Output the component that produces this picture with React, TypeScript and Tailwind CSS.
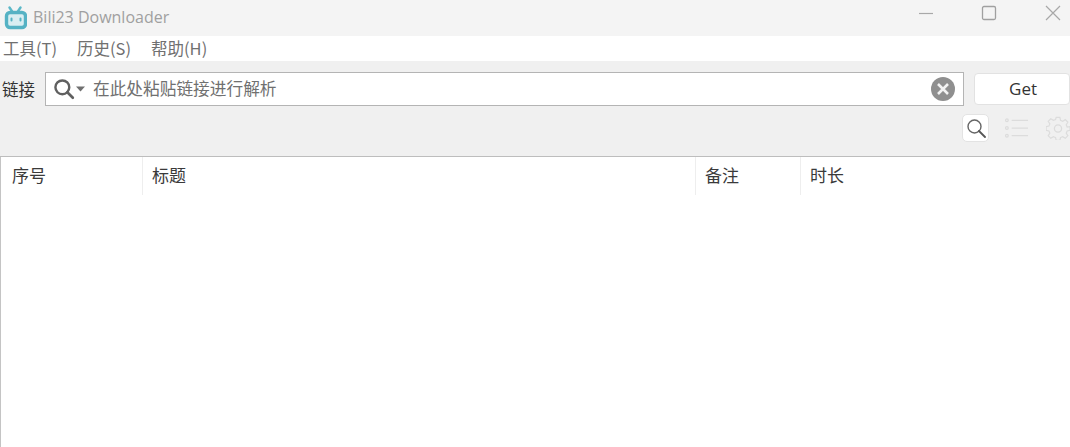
import React from "react";

const cjk = { fontFamily: '"Noto Sans CJK SC", "Noto Sans", sans-serif' };

function Logo() {
  return (
    <svg width="24" height="24" viewBox="0 0 24 24" fill="none">
      <path d="M6.5 1.5 L9.5 6 M17.5 1.5 L14.5 6" stroke="#5bb8c8" strokeWidth="2.4" strokeLinecap="round" />
      <rect x="3.5" y="6.5" width="19" height="15" rx="3.5" fill="#d9eef2" stroke="#55b2c4" strokeWidth="3.4" />
      <path d="M8.5 12.5V14.5M17.5 12.5V14.5" stroke="#55b2c4" strokeWidth="2" strokeLinecap="round" />
    </svg>
  );
}

function Column({ label, className }: { label: string; className: string }) {
  return (
    <div className={`flex h-[38px] items-center border-r border-[#eeeeee] pb-[2px] text-[17px] text-[#3a3a3a] ${className}`}>
      {label}
    </div>
  );
}

export default function App() {
  return (
    <div className="flex h-[447px] w-[1070px] flex-col overflow-hidden bg-white" style={cjk}>
      <div className="flex h-[36px] shrink-0 items-center bg-[#f4f4f4] pl-[3px]">
        <Logo />
        <span className="ml-[6px] pb-[2px] text-[16px] text-[#a0a0a0]" style={{ fontFamily: '"Open Sans", sans-serif' }}>
          Bili23 Downloader
        </span>
        <div className="ml-auto flex items-center pb-[10px]">
          <svg width="16" height="16" viewBox="0 0 16 16" className="mr-[47px]">
            <path d="M1 8.5H15" stroke="#a8a8a8" strokeWidth="1.2" />
          </svg>
          <svg width="16" height="16" viewBox="0 0 16 16" className="mr-[48px]">
            <rect x="1.5" y="1.5" width="13" height="13" rx="1.5" fill="none" stroke="#a0a0a0" strokeWidth="1.3" />
          </svg>
          <svg width="16" height="16" viewBox="0 0 16 16" className="mr-[9px]">
            <path d="M1 1L15 15M15 1L1 15" stroke="#a8a8a8" strokeWidth="1.2" />
          </svg>
        </div>
      </div>

      <div className="flex h-[25px] shrink-0 items-center gap-[20px] bg-white pl-[3px] pb-[1px] text-[16.5px] text-[#707070]">
        <span>工具(T)</span>
        <span>历史(S)</span>
        <span>帮助(H)</span>
      </div>

      <div className="flex h-[96px] shrink-0 flex-col border-b border-[#bdbdbd] bg-[#f0f0f0]">
        <div className="mt-[11px] flex h-[34px] items-center">
          <span className="ml-[2px] w-[43px] text-[16.5px] text-[#333333]">链接</span>
          <div className="flex h-[34px] w-[919px] items-center border border-[#b4b4b4] bg-white pl-[7px]">
            <svg width="22" height="22" viewBox="0 0 20 20" fill="none" className="shrink-0">
              <circle cx="8.5" cy="8.5" r="6.3" stroke="#606060" strokeWidth="2.2" />
              <path d="M13 13L18 18" stroke="#606060" strokeWidth="2.4" strokeLinecap="round" />
            </svg>
            <svg width="9" height="6" viewBox="0 0 9 6" className="ml-[1px] shrink-0">
              <path d="M0 0.5H9L4.5 5.5Z" fill="#707070" />
            </svg>
            <span className="ml-[8px] text-[16.7px] text-[#707070]">在此处粘贴链接进行解析</span>
            <svg width="24" height="24" viewBox="0 0 24 24" className="ml-auto mr-[8px] shrink-0">
              <circle cx="12" cy="12" r="12" fill="#8f8f8f" />
              <path d="M7 7L17 17M17 7L7 17" stroke="#f2f2f2" strokeWidth="2.6" />
            </svg>
          </div>
          <div
            className="ml-[10px] flex h-[32px] flex-1 items-center justify-center rounded-[4px] border border-[#e2e2e2] bg-white pl-[2px] text-[17px] text-[#333333]"
            style={{ fontFamily: '"Open Sans", sans-serif' }}
          >
            Get
          </div>
        </div>
        <div className="mt-[8px] flex h-[28px] items-center pl-[962px]">
          <div className="flex h-[28px] w-[28px] items-center justify-center rounded-[5px] border border-[#e3e3e3] bg-white">
            <svg width="20" height="20" viewBox="0 0 20 20" fill="none">
              <circle cx="8.5" cy="8.5" r="6.5" stroke="#666666" strokeWidth="1.4" />
              <path d="M13 13L19 19" stroke="#555555" strokeWidth="1.8" strokeLinecap="round" />
            </svg>
          </div>
          <svg width="26" height="24" viewBox="0 0 26 24" fill="none" className="ml-[15px]">
            <g stroke="#dcdcdc" strokeWidth="1.3">
              <circle cx="3" cy="4" r="1.4" />
              <circle cx="3" cy="12" r="1.4" />
              <circle cx="3" cy="20" r="1.4" />
              <path d="M8 4H25M8 12H25M8 20H25" />
            </g>
          </svg>
          <svg width="24" height="24" viewBox="0 0 24 24" fill="none" className="ml-[17px] shrink-0">
            <path
              d="M10 1h4l.7 3.2 2.4 1 2.8-1.8 2.8 2.8-1.8 2.8 1 2.4L25 11v4l-3.1.7-1 2.4 1.8 2.8-2.8 2.8-2.8-1.8-2.4 1-.7 3.1h-4l-.7-3.1-2.4-1-2.8 1.8-2.8-2.8 1.8-2.8-1-2.4L-1 15v-4l3.1-.6 1-2.4-1.8-2.8 2.8-2.8 2.8 1.8 2.4-1z"
              transform="translate(1 .5) scale(.92)"
              stroke="#dcdcdc"
              strokeWidth="1.3"
            />
            <circle cx="12" cy="12.5" r="3.6" stroke="#dcdcdc" strokeWidth="1.3" />
          </svg>
        </div>
      </div>

      <div className="flex-1 border-l border-[#c4c4c4] bg-white">
        <div className="flex">
          <Column label="序号" className="w-[142px] pl-[11px]" />
          <Column label="标题" className="w-[553px] pl-[9px]" />
          <Column label="备注" className="w-[105px] pl-[9px]" />
          <div className="flex h-[38px] items-center pl-[9px] pb-[2px] text-[17px] text-[#3a3a3a]">时长</div>
        </div>
      </div>
    </div>
  );
}
